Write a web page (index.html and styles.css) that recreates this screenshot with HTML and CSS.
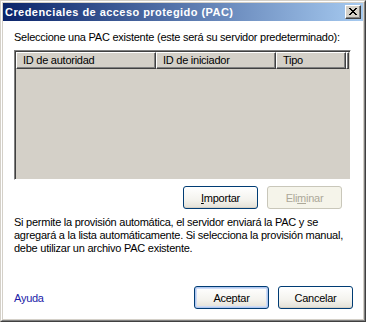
FILE: index.html
```html
<!DOCTYPE html>
<html lang="es">
<head>
<meta charset="utf-8">
<title>Credenciales de acceso protegido (PAC)</title>
<link rel="stylesheet" href="styles.css">
</head>
<body>
<div class="window">
  <div class="frame">
    <div class="titlebar">
      <span class="title">Credenciales de acceso protegido (PAC)</span>
      <span class="close" aria-label="Cerrar">
        <svg width="8" height="7" viewBox="0 0 8 7" shape-rendering="crispEdges">
          <path d="M0 0h2v1H0zM6 0h2v1H6zM1 1h2v1H1zM5 1h2v1H5zM2 2h4v1H2zM3 3h2v1H3zM2 4h4v1H2zM1 5h2v1H1zM5 5h2v1H5zM0 6h2v1H0zM6 6h2v1H6z" fill="#000"/>
        </svg>
      </span>
    </div>
    <div class="client">
      <p class="prompt">Seleccione una PAC existente (este será su servidor predeterminado):</p>
      <div class="list">
        <div class="list-head">
          <div class="col c1">ID de autoridad</div>
          <div class="col c2">ID de iniciador</div>
          <div class="col c3">Tipo</div>
          <div class="col filler"></div>
        </div>
        <div class="list-body"></div>
      </div>
      <div class="list-actions">
        <button class="btn" type="button"><u>I</u>mportar</button>
        <button class="btn" type="button" disabled>Eli<u>m</u>inar</button>
      </div>
      <p class="info">Si permite la provisión automática, el servidor enviará la PAC y se agregará a la lista automáticamente. Si selecciona la provisión manual, debe utilizar un archivo PAC existente.</p>
      <div class="footer">
        <a class="help" href="#">Ayuda</a>
        <div class="dlg-buttons">
          <button class="btn default" type="button">Aceptar</button>
          <button class="btn" type="button">Cancelar</button>
        </div>
      </div>
    </div>
  </div>
</div>
</body>
</html>
```
FILE: styles.css
```css
* { box-sizing: border-box; }
html, body { margin: 0; padding: 0; background: #fff; }
body {
  font-family: "Liberation Sans", Arial, sans-serif;
  font-size: 11px;
  letter-spacing: -0.25px;
  color: #000;
}
.window {
  width: 366px;
  height: 322px;
  border: 1px solid;
  border-color: #d4d0c8 #404040 #404040 #d4d0c8;
}
.frame {
  height: 100%;
  border: 1px solid;
  border-color: #fff #808080 #808080 #fff;
  background: #d4d0c8;
  padding: 1px;
  display: flex;
  flex-direction: column;
}
.titlebar {
  height: 18px;
  flex: none;
  background: linear-gradient(to right, #0a246a, #a6caf0);
  display: flex;
  align-items: center;
  justify-content: space-between;
  padding: 0 2px 0 2px;
}
.title {
  color: #fff;
  font-weight: bold;
  font-size: 11px;
  letter-spacing: 0.45px;
  white-space: nowrap;
}
.close {
  width: 16px;
  height: 14px;
  background: #d4d0c8;
  border: 1px solid;
  border-color: #fff #404040 #404040 #fff;
  box-shadow: inset -1px -1px 0 #808080;
  display: flex;
  align-items: center;
  justify-content: center;
  padding: 0 1px 1px 0;
}
.close svg { display: block; }
.client {
  flex: 1;
  background: #fff;
  padding: 10px 10px 10px 11px;
  display: flex;
  flex-direction: column;
}
.prompt {
  margin: 0;
  line-height: 13px;
  white-space: nowrap;
}
.list {
  margin-top: 6px;
  width: 337px;
  height: 130px;
  border: 1px solid;
  border-color: #808080 #fff #fff #808080;
  box-shadow: inset 1px 1px 0 #404040, inset -1px -1px 0 #d4d0c8;
  background: #d4d0c8;
  padding: 1px;
  display: flex;
  flex-direction: column;
}
.list-head {
  display: flex;
  height: 17px;
  flex: none;
}
.col {
  height: 17px;
  border: 1px solid;
  border-color: #fff #404040 #404040 #fff;
  box-shadow: inset -1px -1px 0 #808080;
  background: #d4d0c8;
  padding: 0 6px;
  line-height: 14px;
  white-space: nowrap;
  overflow: hidden;
}
.c1 { width: 140px; }
.c2 { width: 120px; }
.c3 { width: 70px; }
.filler { flex: 1; padding: 0; }
.list-body { flex: 1; }
.list-actions {
  margin-top: 6px;
  display: flex;
  justify-content: flex-end;
  gap: 9px;
  width: 337px;
  padding-right: 9px;
}
.btn {
  width: 75px;
  height: 23px;
  font-family: inherit;
  font-size: 11px;
  letter-spacing: -0.25px;
  color: #000;
  border: 1px solid #003c74;
  border-radius: 3px;
  background: linear-gradient(to bottom, #ffffff 0%, #f4f3ee 60%, #e3e0d6 100%);
  box-shadow: inset 0 -1px 0 #d6d0c5;
  padding: 0;
  margin: 0;
}
.btn u { text-decoration: underline; }
.btn:disabled {
  color: #aca899;
  border-color: #c9c7ba;
  background: #f5f4ea;
  box-shadow: none;
}
.btn.default {
  box-shadow: inset 0 0 0 1px #b0c8f0, inset 0 0 0 2px #cedbf5;
}
.info {
  margin: 7px 0 0 0;
  line-height: 13px;
  width: 337px;
}
.footer {
  margin-top: auto;
  display: flex;
  align-items: center;
  justify-content: space-between;
}
.help {
  color: #1c1ca8;
  text-decoration: none;
}
.dlg-buttons {
  display: flex;
  gap: 9px;
}
```
